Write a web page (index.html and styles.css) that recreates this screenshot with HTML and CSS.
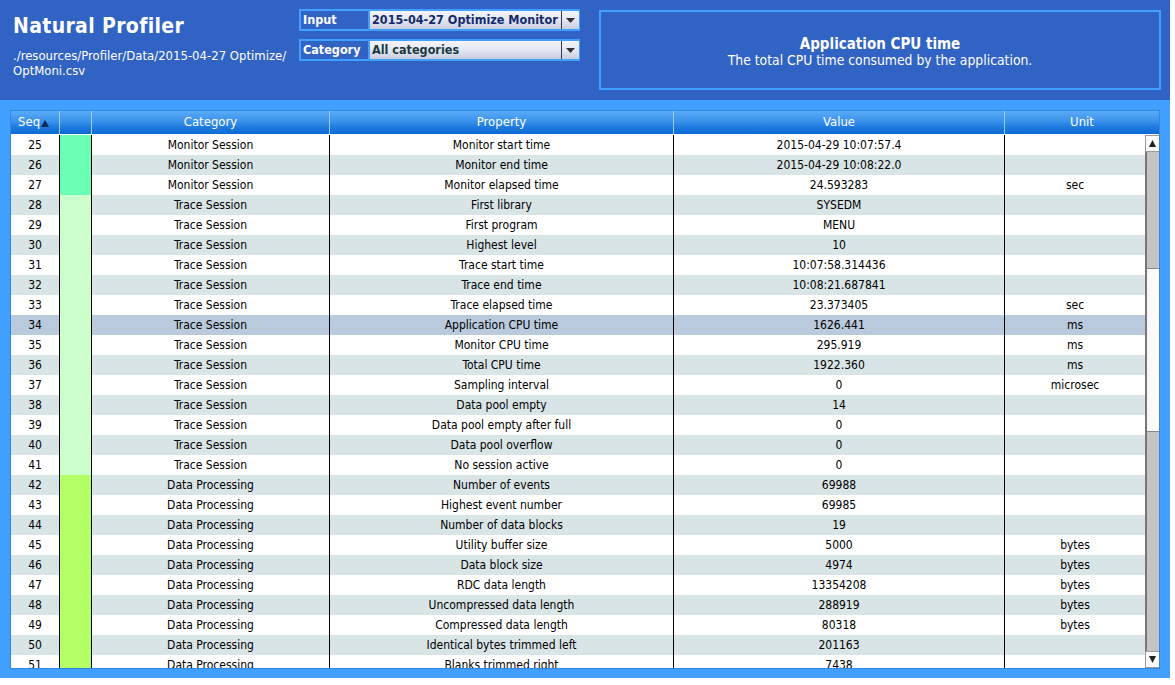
FILE: index.html
```html
<!DOCTYPE html>
<html>
<head>
<meta charset="utf-8">
<link rel="stylesheet" href="styles.css">
</head>
<body>
<div class="app">
  <div class="header">
    <div class="brand">
      <div class="title">Natural Profiler</div>
      <div class="path">./resources/Profiler/Data/2015-04-27 Optimize/<br>OptMoni.csv</div>
    </div>
    <div class="controls">
      <div class="ctl">
        <div class="lbl">Input</div>
        <div class="sel sel-input"><span class="sel-text">2015-04-27 Optimize Monitor</span><span class="arrow"><svg width="9" height="5" viewBox="0 0 9 5"><path d="M0 0H9L4.5 5Z" fill="#333"/></svg></span></div>
      </div>
      <div class="ctl">
        <div class="lbl">Category</div>
        <div class="sel sel-cat"><span class="sel-text">All categories</span><span class="arrow"><svg width="9" height="5" viewBox="0 0 9 5"><path d="M0 0H9L4.5 5Z" fill="#333"/></svg></span></div>
      </div>
    </div>
    <div class="info">
      <div class="info-title">Application CPU time</div>
      <div class="info-sub">The total CPU time consumed by the application.</div>
    </div>
  </div>
  <div class="main">
    <div class="table">
      <div class="thead">
        <div class="th c-seq seq-h">Seq<svg class="sort" width="8" height="7" viewBox="0 0 8 7"><path d="M4 0L8 7H0Z" fill="#0a2a55"/></svg></div>
        <div class="th c-col"></div>
        <div class="th c-cat">Category</div>
        <div class="th c-prop">Property</div>
        <div class="th c-val">Value</div>
        <div class="th c-unit-h">Unit</div>
      </div>
      <div class="tbody">
        <div class="rows">
          <div class="row odd"><div class="td c-seq">25</div><div class="td c-col mon"></div><div class="td c-cat">Monitor Session</div><div class="td c-prop">Monitor start time</div><div class="td c-val">2015-04-29 10:07:57.4</div><div class="td c-unit"></div></div>
          <div class="row even"><div class="td c-seq">26</div><div class="td c-col mon"></div><div class="td c-cat">Monitor Session</div><div class="td c-prop">Monitor end time</div><div class="td c-val">2015-04-29 10:08:22.0</div><div class="td c-unit"></div></div>
          <div class="row odd"><div class="td c-seq">27</div><div class="td c-col mon"></div><div class="td c-cat">Monitor Session</div><div class="td c-prop">Monitor elapsed time</div><div class="td c-val">24.593283</div><div class="td c-unit">sec</div></div>
          <div class="row even"><div class="td c-seq">28</div><div class="td c-col trc"></div><div class="td c-cat">Trace Session</div><div class="td c-prop">First library</div><div class="td c-val">SYSEDM</div><div class="td c-unit"></div></div>
          <div class="row odd"><div class="td c-seq">29</div><div class="td c-col trc"></div><div class="td c-cat">Trace Session</div><div class="td c-prop">First program</div><div class="td c-val">MENU</div><div class="td c-unit"></div></div>
          <div class="row even"><div class="td c-seq">30</div><div class="td c-col trc"></div><div class="td c-cat">Trace Session</div><div class="td c-prop">Highest level</div><div class="td c-val">10</div><div class="td c-unit"></div></div>
          <div class="row odd"><div class="td c-seq">31</div><div class="td c-col trc"></div><div class="td c-cat">Trace Session</div><div class="td c-prop">Trace start time</div><div class="td c-val">10:07:58.314436</div><div class="td c-unit"></div></div>
          <div class="row even"><div class="td c-seq">32</div><div class="td c-col trc"></div><div class="td c-cat">Trace Session</div><div class="td c-prop">Trace end time</div><div class="td c-val">10:08:21.687841</div><div class="td c-unit"></div></div>
          <div class="row odd"><div class="td c-seq">33</div><div class="td c-col trc"></div><div class="td c-cat">Trace Session</div><div class="td c-prop">Trace elapsed time</div><div class="td c-val">23.373405</div><div class="td c-unit">sec</div></div>
          <div class="row selected"><div class="td c-seq">34</div><div class="td c-col trc"></div><div class="td c-cat">Trace Session</div><div class="td c-prop">Application CPU time</div><div class="td c-val">1626.441</div><div class="td c-unit">ms</div></div>
          <div class="row odd"><div class="td c-seq">35</div><div class="td c-col trc"></div><div class="td c-cat">Trace Session</div><div class="td c-prop">Monitor CPU time</div><div class="td c-val">295.919</div><div class="td c-unit">ms</div></div>
          <div class="row even"><div class="td c-seq">36</div><div class="td c-col trc"></div><div class="td c-cat">Trace Session</div><div class="td c-prop">Total CPU time</div><div class="td c-val">1922.360</div><div class="td c-unit">ms</div></div>
          <div class="row odd"><div class="td c-seq">37</div><div class="td c-col trc"></div><div class="td c-cat">Trace Session</div><div class="td c-prop">Sampling interval</div><div class="td c-val">0</div><div class="td c-unit">microsec</div></div>
          <div class="row even"><div class="td c-seq">38</div><div class="td c-col trc"></div><div class="td c-cat">Trace Session</div><div class="td c-prop">Data pool empty</div><div class="td c-val">14</div><div class="td c-unit"></div></div>
          <div class="row odd"><div class="td c-seq">39</div><div class="td c-col trc"></div><div class="td c-cat">Trace Session</div><div class="td c-prop">Data pool empty after full</div><div class="td c-val">0</div><div class="td c-unit"></div></div>
          <div class="row even"><div class="td c-seq">40</div><div class="td c-col trc"></div><div class="td c-cat">Trace Session</div><div class="td c-prop">Data pool overflow</div><div class="td c-val">0</div><div class="td c-unit"></div></div>
          <div class="row odd"><div class="td c-seq">41</div><div class="td c-col trc"></div><div class="td c-cat">Trace Session</div><div class="td c-prop">No session active</div><div class="td c-val">0</div><div class="td c-unit"></div></div>
          <div class="row even"><div class="td c-seq">42</div><div class="td c-col dat"></div><div class="td c-cat">Data Processing</div><div class="td c-prop">Number of events</div><div class="td c-val">69988</div><div class="td c-unit"></div></div>
          <div class="row odd"><div class="td c-seq">43</div><div class="td c-col dat"></div><div class="td c-cat">Data Processing</div><div class="td c-prop">Highest event number</div><div class="td c-val">69985</div><div class="td c-unit"></div></div>
          <div class="row even"><div class="td c-seq">44</div><div class="td c-col dat"></div><div class="td c-cat">Data Processing</div><div class="td c-prop">Number of data blocks</div><div class="td c-val">19</div><div class="td c-unit"></div></div>
          <div class="row odd"><div class="td c-seq">45</div><div class="td c-col dat"></div><div class="td c-cat">Data Processing</div><div class="td c-prop">Utility buffer size</div><div class="td c-val">5000</div><div class="td c-unit">bytes</div></div>
          <div class="row even"><div class="td c-seq">46</div><div class="td c-col dat"></div><div class="td c-cat">Data Processing</div><div class="td c-prop">Data block size</div><div class="td c-val">4974</div><div class="td c-unit">bytes</div></div>
          <div class="row odd"><div class="td c-seq">47</div><div class="td c-col dat"></div><div class="td c-cat">Data Processing</div><div class="td c-prop">RDC data length</div><div class="td c-val">13354208</div><div class="td c-unit">bytes</div></div>
          <div class="row even"><div class="td c-seq">48</div><div class="td c-col dat"></div><div class="td c-cat">Data Processing</div><div class="td c-prop">Uncompressed data length</div><div class="td c-val">288919</div><div class="td c-unit">bytes</div></div>
          <div class="row odd"><div class="td c-seq">49</div><div class="td c-col dat"></div><div class="td c-cat">Data Processing</div><div class="td c-prop">Compressed data length</div><div class="td c-val">80318</div><div class="td c-unit">bytes</div></div>
          <div class="row even"><div class="td c-seq">50</div><div class="td c-col dat"></div><div class="td c-cat">Data Processing</div><div class="td c-prop">Identical bytes trimmed left</div><div class="td c-val">201163</div><div class="td c-unit"></div></div>
          <div class="row odd"><div class="td c-seq">51</div><div class="td c-col dat"></div><div class="td c-cat">Data Processing</div><div class="td c-prop">Blanks trimmed right</div><div class="td c-val">7438</div><div class="td c-unit"></div></div>
        </div>
        <div class="scrollbar">
          <div class="sb-btn"><svg width="7" height="7" viewBox="0 0 7 7"><path d="M3.5 0L7 7H0Z" fill="#222"/></svg></div>
          <div class="sb-track">
            <div class="sb-gap1"></div>
            <div class="sb-thumb"></div>
            <div class="sb-gap2"></div>
          </div>
          <div class="sb-btn"><svg width="7" height="7" viewBox="0 0 7 7"><path d="M0 0H7L3.5 7Z" fill="#222"/></svg></div>
        </div>
      </div>
    </div>
  </div>
</div>
</body>
</html>
```

FILE: styles.css
```css
* { box-sizing: border-box; }
html, body { margin: 0; padding: 0; background: #ffffff; }
body {
  font-family: "DejaVu Sans Condensed", "DejaVu Sans", sans-serif;
  font-stretch: condensed;
  font-size: 12px;
  color: #000;
}
.app {
  width: 1170px;
  height: 678px;
  background: #41a0ff;
  display: flex;
  flex-direction: column;
}
.header {
  height: 100px;
  background: #3163c4;
  display: flex;
  color: #fff;
}
.brand {
  width: 299px;
  padding: 13px 0 0 13px;
}
.title {
  font-weight: bold;
  font-size: 21px;
  line-height: 26px;
  letter-spacing: 0.35px;
}
.path {
  margin-top: 9px;
  font-size: 13px;
  line-height: 15px;
}
.controls {
  width: 281px;
  padding-top: 9px;
  display: flex;
  flex-direction: column;
  gap: 8px;
}
.ctl {
  display: flex;
  height: 22px;
  border: 1px solid #41a0ff;
}
.lbl {
  width: 70px;
  border: 1px solid #41a0ff;
  border-right-width: 2px;
  background: #3163c4;
  font-weight: bold;
  font-size: 12.5px;
  line-height: 18px;
  padding-left: 2px;
}
.sel {
  flex: 1;
  display: flex;
  background: linear-gradient(#f4f4fb 0%, #e4e6f2 50%, #c9cde0 100%);
  border-top: 1px solid #41a0ff;
  border-bottom: 1px solid #41a0ff;
}
.sel-text {
  flex: 1;
  font-weight: bold;
  font-size: 12.5px;
  line-height: 18px;
  padding-left: 2px;
  white-space: nowrap;
  overflow: hidden;
}
.sel-input .sel-text { color: #142a6e; }
.sel-cat .sel-text { color: #1a3a3e; }
.arrow {
  width: 18px;
  border-left: 1px solid #2c3a4e;
  display: flex;
  align-items: center;
  justify-content: center;
  padding-top: 1px;
}
.info {
  margin-left: 19px;
  margin-top: 10px;
  width: 562px;
  height: 80px;
  border: 2px solid #41a0ff;
  display: flex;
  flex-direction: column;
  align-items: center;
  justify-content: center;
  padding-top: 2px;
}
.info-title {
  font-weight: bold;
  font-size: 15px;
  line-height: 18px;
}
.info-sub {
  font-size: 13.8px;
  line-height: 15px;
}
.main {
  padding: 10px 0 0 10px;
}
.table {
  width: 1150px;
  height: 559px;
  border: 1px solid #2f88e6;
  display: flex;
  flex-direction: column;
  background: #fff;
}
.thead {
  height: 23px;
  display: flex;
  background: linear-gradient(#5aabf7 0%, #3a92ec 45%, #1e7ade 70%, #0c6ad4 100%);
  color: #fff;
  font-size: 13px;
  line-height: 22px;
}
.th {
  text-align: center;
  border-left: 1px solid #9ccaf4;
  white-space: nowrap;
}
.th.c-seq { border-left: none; }
.seq-h {
  text-align: left;
  padding-left: 7px;
}
.sort { margin-left: 1px; vertical-align: -1px; }
.c-seq { width: 48px; }
.c-col { width: 32px; }
.c-cat { width: 238px; }
.c-prop { width: 344px; }
.c-val { width: 331px; }
.c-unit { width: 141px; }
.c-unit-h { flex: 1; }
.tbody {
  flex: 1;
  display: flex;
  overflow: hidden;
}
.rows {
  width: 1134px;
  padding-top: 1px;
  overflow: hidden;
}
.row {
  display: flex;
  height: 20px;
  line-height: 20px;
}
.row.odd { background: #ffffff; }
.row.even { background: #d9e4e6; }
.row.selected { background: #b8cadc; }
.td {
  text-align: center;
  white-space: nowrap;
  overflow: hidden;
  border-left: 1px solid #000;
}
.td.c-seq { border-left: none; }
.mon { background: #6affb5; }
.trc { background: #ccffcc; }
.dat { background: #b3ff66; }
.scrollbar {
  width: 14px;
  display: flex;
  flex-direction: column;
  margin-top: 1px;
}
.sb-btn {
  height: 17px;
  background: #fafafa;
  border: 1px solid #9a9a9a;
  border-right: none;
  display: flex;
  align-items: center;
  justify-content: center;
}
.sb-track {
  flex: 1;
  display: flex;
  flex-direction: column;
  background: #c4c4c4;
  border-left: 2px solid #777;
}
.sb-gap1 { height: 116px; }
.sb-thumb {
  height: 164px;
  background: linear-gradient(90deg, #f6f6f6, #ffffff);
  border-top: 1px solid #888;
  border-bottom: 1px solid #888;
}
.sb-gap2 { flex: 1; }
```
